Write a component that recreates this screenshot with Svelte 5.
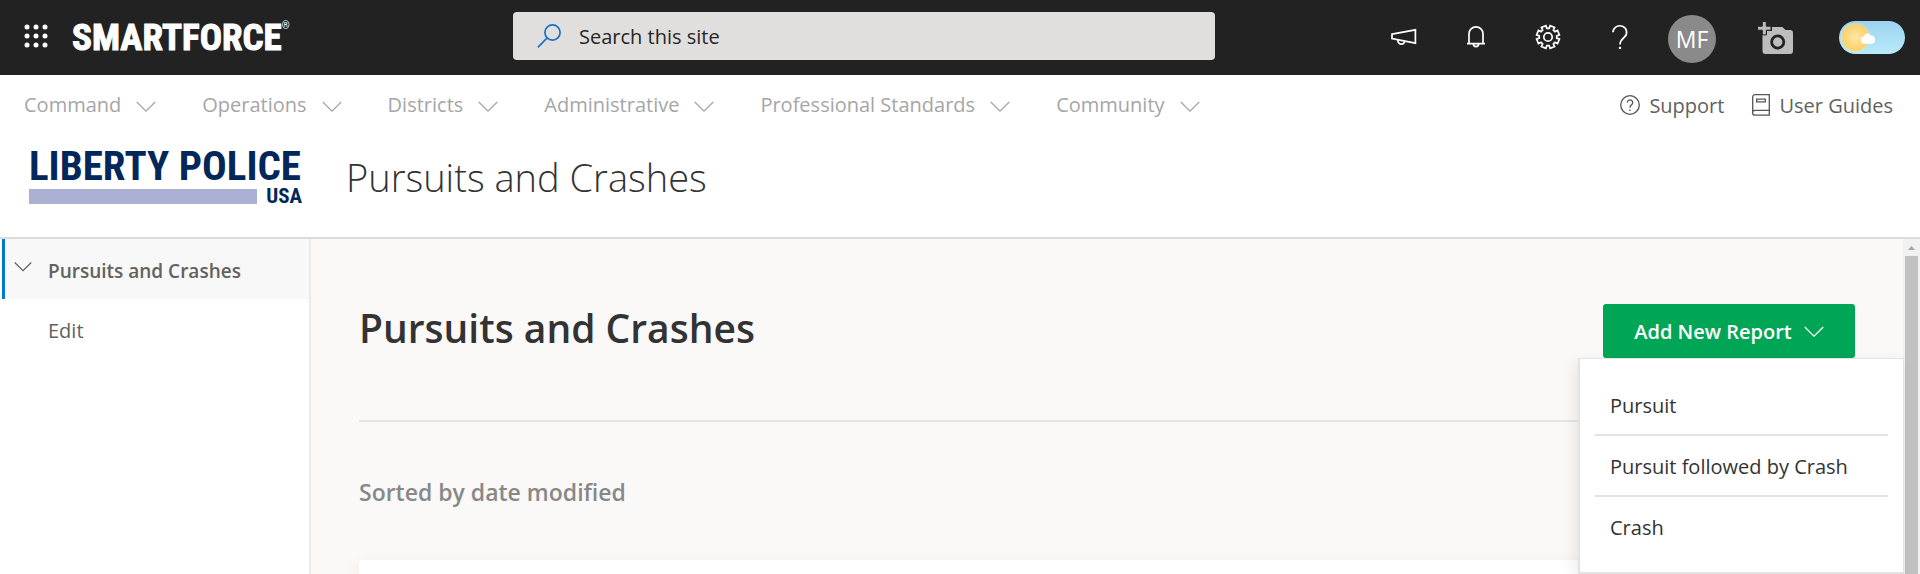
<script>
  const sections = [
    'Command',
    'Operations',
    'Districts',
    'Administrative',
    'Professional Standards',
    'Community'
  ];
  const reportTypes = ['Pursuit', 'Pursuit followed by Crash', 'Crash'];
  const teeth = [0, 45, 90, 135, 180, 225, 270, 315];

  let menuOpen = $state(true);
  let dayMode = $state(true);

  // Outline of the settings gear: eight teeth around a 24-unit box.
  const gear = teeth
    .flatMap((a) =>
      [
        [-15, 8.8],
        [-12, 11.6],
        [12, 11.6],
        [15, 8.8]
      ].map(([d, r]) => {
        const t = ((a + 22.5 + d) * Math.PI) / 180;
        return `${(12 + r * Math.cos(t)).toFixed(2)},${(12 + r * Math.sin(t)).toFixed(2)}`;
      })
    )
    .join(' ');
</script>

{#snippet chevron()}
  <svg class="chevron" viewBox="0 0 20 12" aria-hidden="true">
    <path d="M.8 1 10 10.2 19.2 1" />
  </svg>
{/snippet}

<div class="page">
  <header class="suite">
    <div class="brand">
      <button class="plain" aria-label="App launcher">
        <svg class="waffle" viewBox="0 0 24 24" aria-hidden="true">
          {#each [3, 12, 21] as y}
            {#each [3, 12, 21] as x}
              <circle cx={x} cy={y} r="2.5" />
            {/each}
          {/each}
        </svg>
      </button>
      <a class="smartforce" href="#home">SMARTFORCE<sup>®</sup></a>
    </div>

    <label class="search">
      <svg viewBox="0 0 24 24" aria-hidden="true">
        <circle cx="15.5" cy="8.5" r="7.6" />
        <path d="M10.2 13.9.8 23.3" />
      </svg>
      <input type="search" placeholder="Search this site" aria-label="Search this site" />
    </label>

    <div class="tools">
      <button class="tool" aria-label="Announcements">
        <svg class="line" viewBox="0 0 26 24">
          <path d="M1 9.2 24.4 4.800v13.400L1 13.600z" />
          <path d="M6.800 14.800c0 5.400 6.600 5.600 6.800 1.400" />
        </svg>
      </button>
      <button class="tool" aria-label="Notifications">
        <svg class="line" viewBox="0 0 26 24">
          <path d="M4 18.600h18M6 18.600V8.800a7 7 0 0 1 14 0v9.800M10.400 19c0 3.400 5.200 3.400 5.200 0" />
        </svg>
      </button>
      <button class="tool" aria-label="Settings">
        <svg class="line" viewBox="-1 0 26 24">
          <polygon points={gear} />
          <circle cx="12" cy="12" r="4.2" />
        </svg>
      </button>
      <button class="tool" aria-label="Help">
        <svg class="line" viewBox="0 0 26 24">
          <path d="M6 7.200a6.800 6.500 0 1 1 11.600 4.700c-2.600 2.400-4.600 3.600-4.600 7.600" />
          <path d="M13 21.800v2.200" stroke-width="2.2" />
        </svg>
      </button>
      <button class="tool" aria-label="Account"><span class="avatar">MF</span></button>
      <button class="plain camera" aria-label="Add photo">
        <svg viewBox="0 0 36 32" aria-hidden="true">
          <path
            fill="#bdbdbd"
            fill-rule="evenodd"
            d="M14 5h10.500l3 3H32a3 3 0 0 1 3 3v18a3 3 0 0 1-3 3H7.500a3 3 0 0 1-3-3V13H9V9h5zM19.700 12.500a7.500 7.500 0 1 0 0 15 7.500 7.500 0 0 0 0-15zm0 2.800a4.700 4.700 0 1 1 0 9.400 4.700 4.700 0 0 1 0-9.400z"
          />
          <path fill="#bdbdbd" stroke="#222" stroke-width="1" d="M4.300-.5h4v4.700h4.700v4H8.300v4.700h-4V8.200H-.5v-4h4.800z" />
        </svg>
      </button>
      <button class="plain mode" aria-label="Day mode" aria-pressed={dayMode} onclick={() => (dayMode = !dayMode)}>
        <svg viewBox="0 0 66 33" aria-hidden="true">
          <defs>
            <linearGradient id="sky" x1="0" y1="0" x2="0" y2="1">
              <stop offset="0" stop-color="#9bd3f1" />
              <stop offset="1" stop-color="#b9eafa" />
            </linearGradient>
            <radialGradient id="sun">
              <stop offset="0" stop-color="#fde6a8" />
              <stop offset=".86" stop-color="#fbd26b" />
              <stop offset="1" stop-color="#fbe7a6" stop-opacity=".2" />
            </radialGradient>
          </defs>
          <rect width="66" height="33" rx="16.500" fill="url(#sky)" />
          <circle cx="16.500" cy="16.500" r="14.800" fill="url(#sun)" />
          <path
            fill="#fff"
            d="M25.300 22.700a3.600 3.600 0 0 1-.6-7.100 3.700 3.700 0 0 1 7-1.100 3.900 3.900 0 0 1 .4 8.200z"
          />
        </svg>
      </button>
    </div>
  </header>

  <div class="site">
    <div class="bar">
      <nav class="sections" aria-label="Site">
        {#each sections as name}
          <a href="#{name}">{name}{@render chevron()}</a>
        {/each}
      </nav>
      <nav class="help" aria-label="Help">
        <a href="#support">
          <svg class="thin" viewBox="0 0 20 20" aria-hidden="true">
            <circle cx="10" cy="10" r="9.300" />
            <path d="M7.300 7.600a2.700 2.700 0 1 1 4.500 2C10.800 10.500 10 11 10 12.800M10 14.600v1.400" />
          </svg>
          <span>Support</span>
        </a>
        <a href="#guides">
          <svg class="thin book" viewBox="0 0 18 22" aria-hidden="true">
            <path d="M17.300 16.300H3a2.300 2.300 0 0 0 0 4.900h14.300V.7H3A2.300 2.300 0 0 0 .7 3v15.800M4.700 5.200h8.600v2.600H4.700z" />
          </svg>
          <span>User Guides</span>
        </a>
      </nav>
    </div>
    <div class="identity">
      <a class="police" href="#site">
        <span class="name">LIBERTY POLICE</span>
        <span class="under"><i></i><span>USA</span></span>
      </a>
      <span class="site-title">Pursuits and Crashes</span>
    </div>
  </div>

  <div class="body">
    <nav class="side" aria-label="Pages">
      <a class="current" href="#pursuits">{@render chevron()}Pursuits and Crashes</a>
      <a href="#edit">Edit</a>
    </nav>

    <main>
      <div class="head">
        <h1>Pursuits and Crashes</h1>
        <div class="add">
          <button class="primary" aria-expanded={menuOpen} onclick={() => (menuOpen = !menuOpen)}>
            Add New Report{@render chevron()}
          </button>
          {#if menuOpen}
            <ul class="menu">
              {#each reportTypes as type}
                <li><button>{type}</button></li>
              {/each}
            </ul>
          {/if}
        </div>
      </div>
      <p class="sorted">Sorted by date modified</p>
      <div class="card"></div>
    </main>

    <div class="scrollbar" aria-hidden="true">
      <svg viewBox="0 0 17 17"><path d="M5 11h7L8.500 7z" fill="#a3a3a3" /></svg>
      <div class="thumb"></div>
    </div>
  </div>
</div>

<style>
  :global(body) {
    margin: 0;
  }
  .page {
    display: flex;
    flex-direction: column;
    min-height: 100vh;
    background: #fff;
    color: #333;
    font-family: 'Segoe UI', 'Open Sans', 'Noto Sans', sans-serif;
    font-size: 20px;
    line-height: 28px;
  }
  a {
    color: inherit;
    text-decoration: none;
  }
  button,
  input {
    font: inherit;
    color: inherit;
  }
  .plain,
  .tool {
    display: flex;
    align-items: center;
    justify-content: center;
    padding: 0;
    border: 0;
    background: none;
  }
  svg {
    display: block;
    flex: none;
    overflow: visible;
  }
  .chevron {
    width: 20px;
    height: 12px;
    fill: none;
    stroke: currentColor;
    stroke-width: 1.3;
  }

  .suite {
    display: flex;
    align-items: center;
    height: 75px;
    background: #222;
    color: #fff;
  }
  .brand {
    display: flex;
    align-items: center;
    gap: 24px;
    flex: 0 0 489px;
    padding-left: 24px;
  }
  .waffle {
    width: 24px;
    height: 24px;
    margin-bottom: 4px;
    fill: #fff;
  }
  .smartforce {
    display: flex;
    font-family: 'Roboto Condensed', 'Open Sans Condensed', 'Liberation Sans Narrow', sans-serif;
    font-size: 37px;
    font-weight: 700;
    line-height: 48px;
    -webkit-text-stroke: 1px #fff;
  }
  .smartforce sup {
    font-size: 10px;
    line-height: 24px;
    font-weight: 400;
    -webkit-text-stroke: 0;
  }
  .search {
    display: flex;
    align-items: center;
    gap: 18px;
    flex: 0 1 702px;
    box-sizing: border-box;
    height: 48px;
    margin-bottom: 3px;
    padding: 0 24px;
    border-radius: 4px;
    background: #e1dfdd;
  }
  .search svg {
    width: 24px;
    height: 24px;
    fill: none;
    stroke: #1a73c1;
    stroke-width: 1.7;
  }
  .search input {
    flex: 1;
    min-width: 0;
    padding: 2px 0 0;
    border: 0;
    outline: 0;
    background: none;
  }
  .search input::placeholder {
    color: #262626;
    opacity: 1;
  }
  .tools {
    display: flex;
    align-items: center;
    margin-left: auto;
    padding-right: 15px;
  }
  .tool {
    width: 72px;
    height: 72px;
  }
  .line {
    width: 26px;
    height: 24px;
    margin-bottom: 2px;
    fill: none;
    stroke: #fff;
    stroke-width: 1.7;
  }
  .avatar {
    width: 48px;
    margin-top: 2px;
    border-radius: 50%;
    background: #8a8a8a;
    font-size: 23px;
    line-height: 48px;
    text-align: center;
  }
  .camera {
    margin: 0 45px 0 30px;
  }
  .camera svg {
    width: 36px;
    height: 32px;
  }
  .mode svg {
    width: 66px;
    height: 33px;
  }

  .site {
    border-bottom: 2px solid #dcdcdc;
  }
  .bar {
    display: flex;
    justify-content: space-between;
    height: 28px;
    padding: 16px 27px 0 24px;
  }
  .sections,
  .help {
    display: flex;
    gap: 46px;
  }
  .sections {
    color: #a6a6a6;
  }
  .sections a {
    display: flex;
    align-items: center;
    gap: 15px;
  }
  .sections .chevron {
    margin-top: 4px;
  }
  .help {
    gap: 28px;
    color: #616161;
  }
  .help a {
    display: flex;
    align-items: center;
    gap: 9px;
  }
  .help span {
    padding-top: 2px;
  }
  .thin {
    width: 20px;
    height: 20px;
    fill: none;
    stroke: #555;
    stroke-width: 1.3;
  }
  .thin.book {
    width: 18px;
    height: 22px;
  }
  .identity {
    display: flex;
    align-items: center;
    gap: 42px;
    box-sizing: border-box;
    height: 118px;
    padding: 0 0 2px 29px;
  }
  .police {
    display: flex;
    flex-direction: column;
    width: 275px;
    color: #02275a;
    font-family: 'Roboto Condensed', 'Open Sans Condensed', 'Liberation Sans Narrow', sans-serif;
    font-weight: 700;
  }
  .name {
    padding-bottom: 6px;
    font-size: 41px;
    line-height: 32px;
    white-space: nowrap;
  }
  .under {
    display: flex;
    justify-content: space-between;
    align-items: center;
    padding-right: 2px;
    font-size: 21px;
    line-height: 16px;
  }
  .under i {
    width: 228px;
    height: 15px;
    background: #aab1d2;
  }
  .site-title {
    font-size: 38px;
    font-weight: 300;
    line-height: 52px;
  }

  .body {
    display: flex;
    flex: 1;
  }
  .side {
    flex: 0 0 307px;
    padding-left: 2px;
    border-right: 2px solid #eaeaea;
    color: #616161;
  }
  .side a {
    display: flex;
    align-items: center;
    box-sizing: border-box;
    height: 60px;
    padding: 3px 0 0 46px;
  }
  .side .current {
    gap: 16px;
    padding-left: 9px;
    border-left: 3px solid #0078d4;
    background: #f8f8f8;
    font-size: 19px;
    font-weight: 600;
  }
  .side .chevron {
    width: 18px;
    margin-bottom: 8px;
  }
  main {
    display: flex;
    flex: 1;
    flex-direction: column;
    padding: 0 48px;
    background: #faf9f8;
  }
  .head {
    display: flex;
    justify-content: space-between;
    align-items: flex-start;
    height: 116px;
    padding-top: 65px;
    border-bottom: 2px solid #e4e4e4;
  }
  h1 {
    margin: 0;
    font-size: 39px;
    font-weight: 600;
    line-height: 48px;
  }
  .add {
    position: relative;
  }
  .primary {
    display: flex;
    align-items: center;
    justify-content: center;
    gap: 12px;
    width: 252px;
    height: 54px;
    padding: 1px 0 0;
    border: 0;
    border-radius: 3px;
    background: #00a656;
    color: #fff;
    font-weight: 600;
    white-space: nowrap;
  }
  .menu {
    position: absolute;
    top: 100%;
    right: -49px;
    box-sizing: border-box;
    width: 326px;
    margin: 0;
    padding: 16px 15px;
    border: 2px solid #e3e3e3;
    border-width: 1px 1px 2px 2px;
    background: #fff;
    box-shadow: -4px 4px 14px rgb(0 0 0 / 8%);
    list-style: none;
  }
  .menu li + li {
    border-top: 2px solid #e3e3e3;
  }
  .menu button {
    width: 100%;
    height: 59px;
    padding: 3px 15px 0;
    border: 0;
    background: none;
    font-weight: 500;
    text-align: left;
    white-space: nowrap;
  }
  .sorted {
    margin: 56px 0 54px;
    color: #888;
    font-size: 23px;
    font-weight: 600;
  }
  .card {
    flex: 1;
    border-radius: 3px 3px 0 0;
    background: #fff;
    box-shadow: 0 6px 18px rgb(0 0 0 / 8%);
  }
  .scrollbar {
    display: flex;
    flex: 0 0 17px;
    flex-direction: column;
    background: #f1f1f1;
  }
  .scrollbar svg {
    width: 17px;
    height: 17px;
  }
  .thumb {
    flex: 1;
    margin: 0 2px;
    background: #c1c1c1;
  }
</style>
